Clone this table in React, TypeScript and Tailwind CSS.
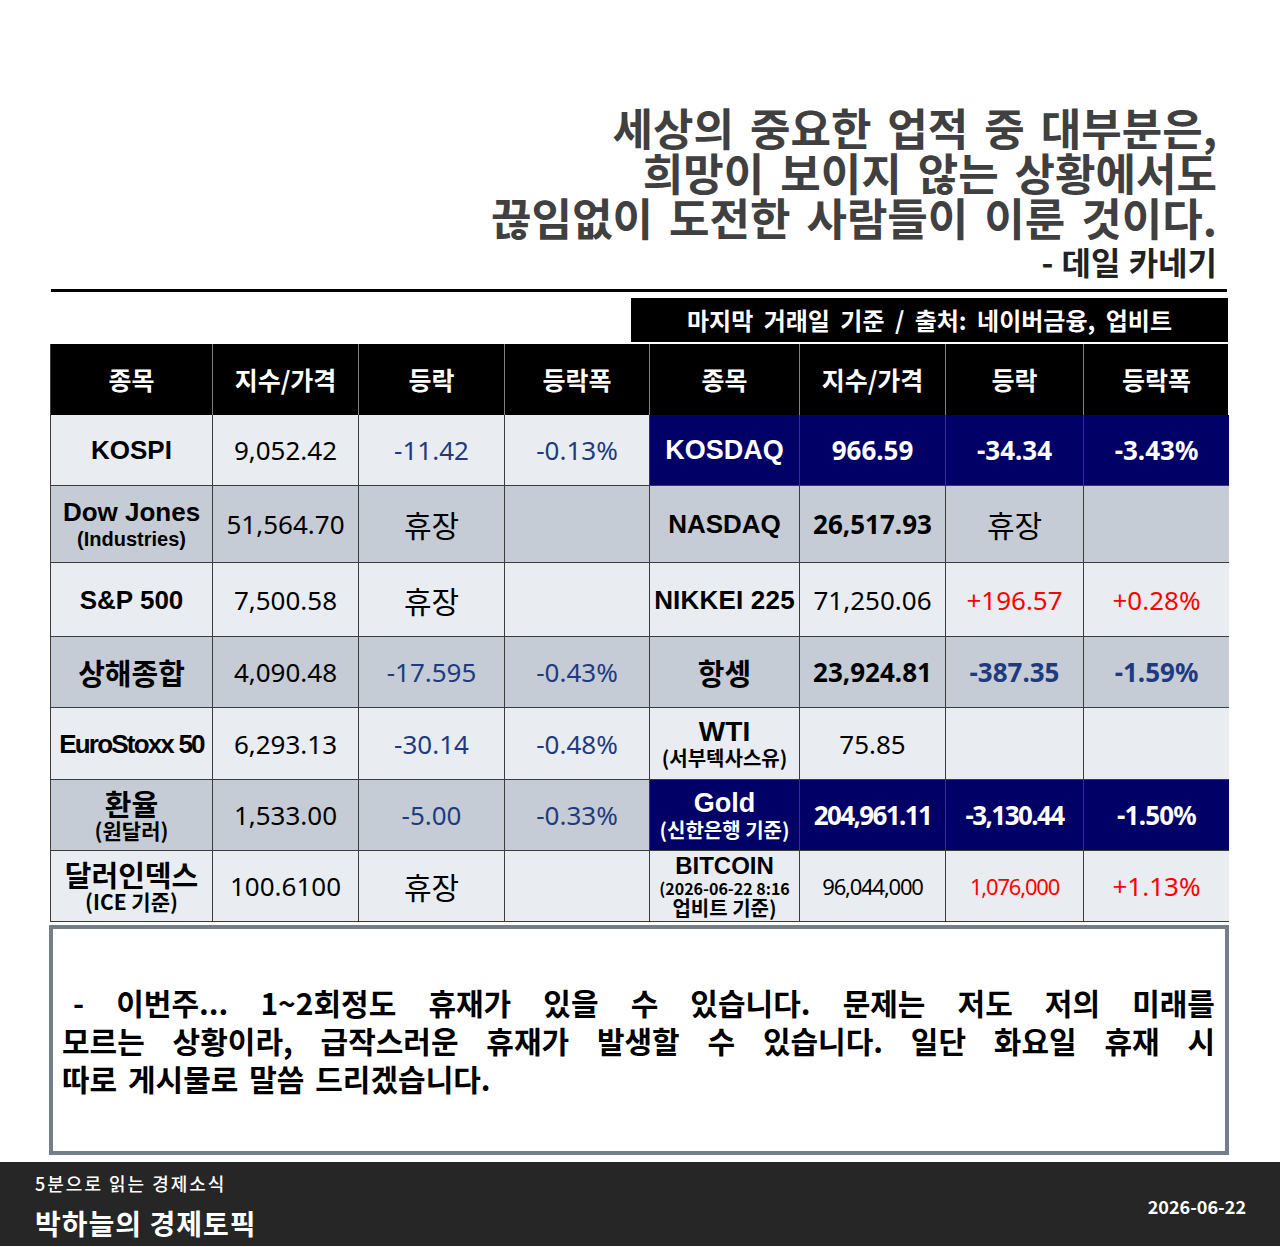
import React from "react";

type C = { main?: React.ReactNode; sub?: React.ReactNode; cls?: string; subCls?: string };

const KR = "font-['Noto_Sans_CJK_KR',sans-serif]";
const LAT = "font-['Liberation_Sans','Noto_Sans_CJK_KR',sans-serif]";
const NUM = "font-['Noto_Sans','Noto_Sans_CJK_KR',sans-serif]";

const lbl = `${LAT} font-bold text-[26px] text-black`;
const lblW = `${LAT} font-bold text-[27px] text-white`;
const num = `${NUM} text-[26px] text-black`;
const numB = `${NUM} font-bold text-[26px] text-black`;
const numW = `${NUM} font-bold text-[26px] text-white`;
const blue = `${NUM} text-[26px] text-[#1f3b80]`;
const blueB = `${NUM} font-bold text-[26px] text-[#1f3b80]`;
const red = `${NUM} text-[26px] text-[#ff0000]`;
const kr = `${KR} text-[30px] text-black`;
const krB = `${KR} font-bold text-[29px] text-black`;

const LIGHT = "bg-[#e9edf2]";
const DARK = "bg-[#c5ccd5]";
const NAVY = "bg-[#000066]";

type Row = { h: string; left: string; right: string; cells: C[] };

const rows: Row[] = [
  {
    h: "h-[71px]",
    left: LIGHT,
    right: NAVY,
    cells: [
      { main: "KOSPI", cls: lbl },
      { main: "9,052.42", cls: num },
      { main: "-11.42", cls: blue },
      { main: "-0.13%", cls: blue },
      { main: "KOSDAQ", cls: lblW },
      { main: "966.59", cls: numW },
      { main: "-34.34", cls: numW },
      { main: "-3.43%", cls: numW },
    ],
  },
  {
    h: "h-[77px]",
    left: DARK,
    right: DARK,
    cells: [
      { main: "Dow Jones", sub: "(Industries)", cls: lbl, subCls: `${LAT} font-bold text-[20px] text-black` },
      { main: "51,564.70", cls: num },
      { main: "휴장", cls: kr },
      {},
      { main: "NASDAQ", cls: lbl },
      { main: "26,517.93", cls: numB },
      { main: "휴장", cls: kr },
      {},
    ],
  },
  {
    h: "h-[74px]",
    left: LIGHT,
    right: LIGHT,
    cells: [
      { main: "S&P 500", cls: lbl },
      { main: "7,500.58", cls: num },
      { main: "휴장", cls: kr },
      {},
      { main: "NIKKEI 225", cls: `${lbl} tracking-[0.2px]` },
      { main: "71,250.06", cls: num },
      { main: "+196.57", cls: red },
      { main: "+0.28%", cls: red },
    ],
  },
  {
    h: "h-[71px]",
    left: DARK,
    right: DARK,
    cells: [
      { main: "상해종합", cls: krB },
      { main: "4,090.48", cls: num },
      { main: "-17.595", cls: blue },
      { main: "-0.43%", cls: blue },
      { main: "항셍", cls: krB },
      { main: "23,924.81", cls: numB },
      { main: "-387.35", cls: blueB },
      { main: "-1.59%", cls: blueB },
    ],
  },
  {
    h: "h-[72px]",
    left: LIGHT,
    right: LIGHT,
    cells: [
      { main: "EuroStoxx 50", cls: `${lbl} tracking-[-1.8px]` },
      { main: "6,293.13", cls: num },
      { main: "-30.14", cls: blue },
      { main: "-0.48%", cls: blue },
      { main: "WTI", sub: "(서부텍사스유)", cls: `${LAT} font-bold text-[28px] text-black`, subCls: `${KR} font-bold text-[20px] text-black` },
      { main: "75.85", cls: num },
      {},
      {},
    ],
  },
  {
    h: "h-[71px]",
    left: DARK,
    right: NAVY,
    cells: [
      { main: "환율", sub: "(원달러)", cls: krB, subCls: `${KR} font-bold text-[21px] text-black` },
      { main: "1,533.00", cls: num },
      { main: "-5.00", cls: blue },
      { main: "-0.33%", cls: blue },
      { main: "Gold", sub: "(신한은행 기준)", cls: lblW, subCls: `${KR} font-bold text-[20px] text-white` },
      { main: "204,961.11", cls: `${numW} tracking-[-1.6px]` },
      { main: "-3,130.44", cls: `${numW} tracking-[-1.6px]` },
      { main: "-1.50%", cls: `${numW} tracking-[-0.8px]` },
    ],
  },
  {
    h: "h-[71px]",
    left: LIGHT,
    right: LIGHT,
    cells: [
      { main: "달러인덱스", sub: "(ICE 기준)", cls: krB, subCls: `${KR} font-bold text-[21px] text-black` },
      { main: "100.6100", cls: num },
      { main: "휴장", cls: kr },
      {},
      { main: "BITCOIN", sub: "bitcoin", cls: `${LAT} font-bold text-[24px] text-black`, subCls: "" },
      { main: "96,044,000", cls: `${NUM} text-[22px] text-black tracking-[-1.2px]` },
      { main: "1,076,000", cls: `${NUM} text-[22px] text-[#ff0000] tracking-[-1.2px]` },
      { main: "+1.13%", cls: red },
    ],
  },
];

const headers = ["종목", "지수/가격", "등락", "등락폭", "종목", "지수/가격", "등락", "등락폭"];
const GRID = "grid grid-cols-[162px_146px_146px_145px_150px_146px_138px_145px]";

function CellView({ c, bg, last }: { c: C; bg: string; last: boolean }) {
  return (
    <div
      className={`${bg} ${last ? "" : "border-r"} border-b border-[#3c3c3c] flex flex-col items-center justify-center text-center overflow-hidden`}
    >
      {c.sub === "bitcoin" ? (
        <>
          <span className={`${c.cls} leading-[24px]`}>{c.main}</span>
          <span className={`${KR} font-bold text-[16px] text-black leading-[20px] whitespace-nowrap`}>(2026-06-22 8:16</span>
          <span className={`${KR} font-bold text-[20px] text-black leading-[20px] whitespace-nowrap`}>업비트 기준)</span>
        </>
      ) : c.sub ? (
        <>
          <span className={`${c.cls} leading-[29px]`}>{c.main}</span>
          <span className={`${c.subCls} leading-[24px] whitespace-nowrap`}>{c.sub}</span>
        </>
      ) : (
        <span className={`${c.cls} leading-[32px] whitespace-nowrap`}>{c.main}</span>
      )}
    </div>
  );
}

export default function App() {
  const memo1 = ["-", "이번주...", "1~2회정도", "휴재가", "있을", "수", "있습니다.", "문제는", "저도", "저의", "미래를"];
  const memo2 = ["모르는", "상황이라,", "급작스러운", "휴재가", "발생할", "수", "있습니다.", "일단", "화요일", "휴재", "시"];
  return (
    <div className="w-[1280px] h-[1247px] bg-white flex flex-col overflow-hidden">
      {/* Quote */}
      <div className={`${KR} font-bold text-right pr-[63px] pt-[105px] text-[#404040] text-[44px] leading-[45px] [word-spacing:6px]`}>
        <div>세상의 중요한 업적 중 대부분은,</div>
        <div>희망이 보이지 않는 상황에서도</div>
        <div>끊임없이 도전한 사람들이 이룬 것이다.</div>
      </div>
      <div className={`${KR} font-bold text-right pr-[63px] mt-[3px] text-[#222222] text-[32px] leading-[36px] [word-spacing:1px]`}>
        - 데일 카네기
      </div>
      <div className="ml-[51px] mt-[10px] w-[1176px] h-[3px] bg-black" />

      {/* Label */}
      <div className="flex justify-end pr-[52px] mt-[6px]">
        <div className={`${KR} w-[597px] h-[44px] bg-black text-white font-bold text-[24px] leading-[44px] text-center [word-spacing:5px]`}>
          마지막 거래일 기준 / 출처: 네이버금융, 업비트
        </div>
      </div>

      {/* Table */}
      <div className="ml-[50px] mt-[2px] w-[1178px] border-l border-[#3c3c3c]">
        <div className={`${GRID} h-[71px] bg-black`}>
          {headers.map((h, i) => (
            <div
              key={i}
              className={`${KR} ${i < 7 ? "border-r border-[#808080]" : ""} flex items-center justify-center text-white font-bold text-[25px]`}
            >
              {h}
            </div>
          ))}
        </div>
        {rows.map((r, ri) => (
          <div key={ri} className={`${GRID} ${r.h}`}>
            {r.cells.map((c, ci) => (
              <CellView key={ci} c={c} bg={ci < 4 ? r.left : r.right} last={ci === 7} />
            ))}
          </div>
        ))}
      </div>

      {/* Memo */}
      <div className="ml-[49px] mt-[3px] w-[1180px] h-[230px] border-4 border-[#747d8a] flex flex-col justify-center pl-[9px] pr-[10px]">
        <div className={`${KR} font-bold text-black text-[30px] leading-[38px]`}>
          <div className="flex justify-between pl-[11px]">
            {memo1.map((w, i) => (
              <span key={i}>{w}</span>
            ))}
          </div>
          <div className="flex justify-between">
            {memo2.map((w, i) => (
              <span key={i}>{w}</span>
            ))}
          </div>
          <div className="[word-spacing:4px]">따로 게시물로 말씀 드리겠습니다.</div>
        </div>
      </div>

      {/* Footer */}
      <div className={`${KR} mt-[7px] h-[84px] bg-[#262626] text-white flex justify-between pl-[35px] pr-[34px]`}>
        <div className="flex flex-col pt-[10px]">
          <span className="text-[18px] leading-[22px] font-medium tracking-[2px]">5분으로 읽는 경제소식</span>
          <span className="text-[28px] leading-[34px] font-bold tracking-[1px] mt-[12px]">박하늘의 경제토픽</span>
        </div>
        <div className="flex items-center pt-[4px]">
          <span className="text-[18px] font-bold">2026-06-22</span>
        </div>
      </div>
    </div>
  );
}
